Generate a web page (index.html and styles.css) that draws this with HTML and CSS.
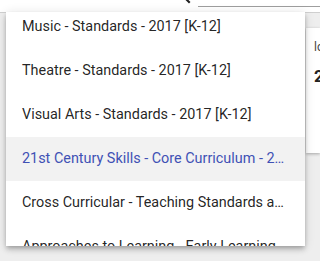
FILE: index.html
```html
<!DOCTYPE html>
<html lang="en">
<head>
  <meta charset="UTF-8" />
  <meta name="viewport" content="width=device-width, initial-scale=1.0" />
  <title>Standards picker</title>
  <link rel="stylesheet" href="styles.css">
</head>
<body>
  <header class="topbar">
    <svg class="search-icon" width="24" height="24" viewBox="0 0 24 24">
      <path d="M15.5 14h-.79l-.28-.27A6.47 6.47 0 0 0 16 9.5 6.5 6.5 0 1 0 9.5 16c1.61 0 3.09-.59 4.23-1.57l.27.28v.79l5 4.99L20.49 19l-4.99-5zm-6 0C7.01 14 5 11.99 5 9.5S7.01 5 9.5 5 14 7.01 14 9.5 11.99 14 9.5 14z" fill="#222"/>
    </svg>
    <div class="search-field"></div>
  </header>
  <main class="content">
    <div class="spacer"></div>
    <section class="card">
      <div class="card-label">lo</div>
      <div class="card-value">2</div>
    </section>
  </main>

  <!-- open select panel, scrolled partway down -->
  <div class="menu">
    <ul class="menu-list">
      <li class="option">Music - Standards - 2017 [K-12]</li>
      <li class="option">Theatre - Standards - 2017 [K-12]</li>
      <li class="option">Visual Arts - Standards - 2017 [K-12]</li>
      <li class="option active">21st Century Skills - Core Curriculum - 2014 [K-12]</li>
      <li class="option">Cross Curricular - Teaching Standards and Practices</li>
      <li class="option">Approaches to Learning - Early Learning Standards</li>
    </ul>
  </div>
</body>
</html>
```

FILE: styles.css
```css
body {
  margin: 0;
  height: 261px;
  overflow: hidden;
  background: #eeeeee;
  font-family: Roboto, "Noto Sans", sans-serif;
  position: relative;
}
.topbar {
  height: 12px;
  background: #fff;
  border-bottom: 1px solid #cfcfcf;
  display: flex;
  align-items: flex-start;
  overflow: hidden;
}
.search-icon {
  margin: -17px 0 0 170px;
  flex: none;
}
.search-field {
  flex: 1;
  margin: 6px 0 0 4px;
  height: 0;
  border-bottom: 1px solid #9e9e9e;
}
.content {
  display: flex;
  padding-top: 15px;
}
.spacer {
  flex: 1;
}
.card {
  width: 6px;
  height: 125px;
  background: #fff;
  box-shadow: 0 1px 3px rgba(0, 0, 0, 0.3);
  padding-left: 8px;
  overflow: hidden;
}
.card-label {
  font-size: 12px;
  color: #444;
  margin-top: 12px;
  white-space: nowrap;
}
.card-value {
  font-size: 17px;
  font-weight: bold;
  color: #222;
  margin-top: 12px;
}

/* dropdown overlay */
.menu {
  position: absolute;
  left: 6px;
  top: 12px;
  width: 299px;
  height: 234px;
  background: #fff;
  overflow: hidden;
  box-shadow: 0 2px 4px -1px rgba(0,0,0,.2), 0 4px 5px 0 rgba(0,0,0,.14), 0 1px 10px 0 rgba(0,0,0,.12);
}
.menu-list {
  list-style: none;
  margin: -7px 0 0;
  padding: 0;
}
.option {
  height: 44px;
  line-height: 44px;
  padding: 0 16px;
  font-size: 14.4px;
  color: rgba(0, 0, 0, 0.87);
  white-space: nowrap;
  overflow: hidden;
  text-overflow: ellipsis;
}
.option.active {
  background: #f2f2f2;
  color: #3f51b5;
}
```
